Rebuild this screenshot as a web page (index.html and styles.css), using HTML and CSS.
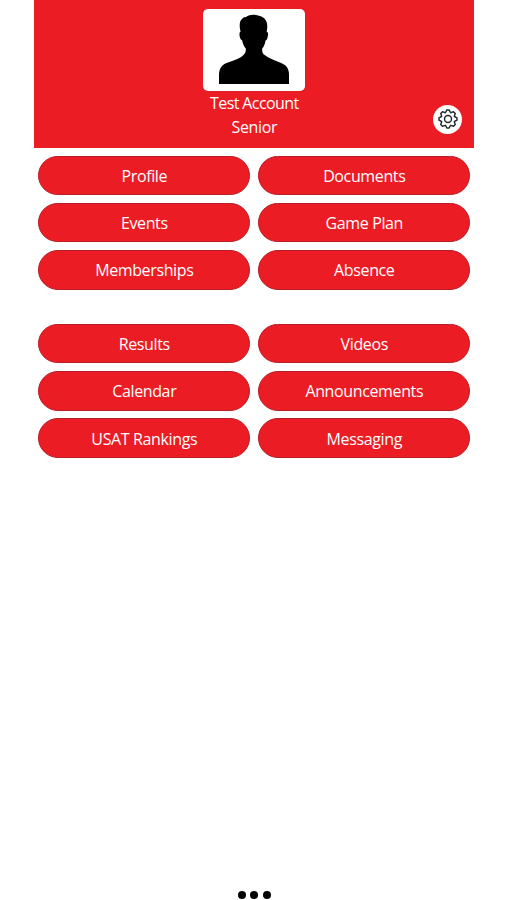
FILE: index.html
```html
<!DOCTYPE html>
<html lang="en">
<head>
  <meta charset="UTF-8">
  <meta name="viewport" content="width=device-width, initial-scale=1.0">
  <title>Test Account</title>
  <link rel="stylesheet" href="styles.css">
</head>
<body>
  <div class="app">
    <header class="header">
      <div class="photo">
        <svg viewBox="0 0 72 71" width="72" height="71">
          <path d="M1 70V61C1 54 4 50.500 10 48.500C17 46.300 22.500 44 25.500 41C27.500 39 28 37 27.800 34.500C25.800 32.200 24.700 29.500 24.200 26.500C22 25.500 21.300 22 21.500 19.500C21.600 18.400 22 18 22.600 18C21 12 21.400 6.500 24.500 4.500C25.300 3.300 27 3.200 28 3C31 .6 36 .2 40 1.500C46 2.200 49 6.500 49.200 11C49.400 14 49 16 48.700 18C50 18 50.300 19.300 50 21C49.700 24 49 26.300 47.500 26.500C47 30 46 32.500 44.200 34.500C44 38 44.500 39.500 47 41.300C50.500 44 56 46.300 62 48.500C68 50.800 71 54 71 61V70Z"/>
        </svg>
      </div>
      <div class="name">Test Account</div>
      <div class="level">Senior</div>
      <a href="#" class="settings" aria-label="Settings">
        <svg viewBox="0 0 24 24" width="22" height="22">
          <path d="M9.300 4.900L10.700 2.200H13.300L14.700 4.900L15.100 5.100L18 4.100L19.900 6L18.900 8.900L19.100 9.300L21.800 10.700V13.300L19.100 14.700L18.900 15.100L19.900 18L18 19.900L15.100 18.900L14.700 19.100L13.300 21.800H10.700L9.300 19.100L8.900 18.900L6 19.900L4.100 18L5.100 15.100L4.900 14.700L2.200 13.300V10.700L4.900 9.300L5.100 8.900L4.100 6L6 4.100L8.900 5.100Z"/>
          <circle cx="12" cy="12" r="3.800"/>
        </svg>
      </a>
    </header>

    <div class="menu">
      <a href="#" class="btn">Profile</a>
      <a href="#" class="btn">Documents</a>
      <a href="#" class="btn">Events</a>
      <a href="#" class="btn">Game Plan</a>
      <a href="#" class="btn">Memberships</a>
      <a href="#" class="btn">Absence</a>
    </div>

    <div class="menu">
      <a href="#" class="btn">Results</a>
      <a href="#" class="btn">Videos</a>
      <a href="#" class="btn">Calendar</a>
      <a href="#" class="btn">Announcements</a>
      <a href="#" class="btn">USAT Rankings</a>
      <a href="#" class="btn">Messaging</a>
    </div>

    <footer class="dots">
      <span class="dot"></span>
      <span class="dot"></span>
      <span class="dot"></span>
    </footer>
  </div>
</body>
</html>
```

FILE: styles.css
```css
* {
  box-sizing: border-box;
}

body {
  margin: 0;
  background-color: #fff;
  font-family: "Segoe UI", "Open Sans", sans-serif;
  font-size: 16px;
  letter-spacing: -0.37px;
  color: #fff;
  overflow: hidden;
}

.app {
  display: flex;
  flex-direction: column;
  width: 440px;
  height: 900px;
  margin-left: 34.3px;
}

.header {
  position: relative;
  display: flex;
  flex-direction: column;
  align-items: center;
  height: 147.5px;
  padding-top: 9px;
  background-color: #eb1c24;
  line-height: 24px;
}

.name {
  letter-spacing: -0.6px;
}

.photo {
  display: flex;
  justify-content: center;
  width: 102px;
  height: 82px;
  padding-top: 5px;
  border-radius: 5px;
  background-color: #fff;
}

/* sits in the corner of the header */
.settings {
  position: absolute;
  right: 12px;
  bottom: 14px;
  display: flex;
  align-items: center;
  justify-content: center;
  width: 29px;
  height: 29px;
  border-radius: 50%;
  background-color: #fff;
}

.settings svg {
  fill: none;
  stroke: #222b30;
  stroke-width: 1.6;
  stroke-linejoin: round;
}

.menu {
  display: grid;
  grid-template-columns: 1fr 1fr;
  gap: 7.8px 8px;
  padding: 8px 4px 0;
  margin-bottom: 26.3px;
}

.btn {
  display: flex;
  align-items: center;
  justify-content: center;
  height: 39.5px;
  padding-top: 1px;
  border: 1px solid #b91d26;
  border-radius: 20px;
  background-color: #eb1c24;
  color: #fff;
  text-decoration: none;
}

.dots {
  display: flex;
  justify-content: center;
  gap: 4.5px;
  margin-top: auto;
  padding-bottom: 1px;
}

.dot {
  width: 8px;
  height: 8px;
  border-radius: 50%;
  background-color: #000;
}
```
